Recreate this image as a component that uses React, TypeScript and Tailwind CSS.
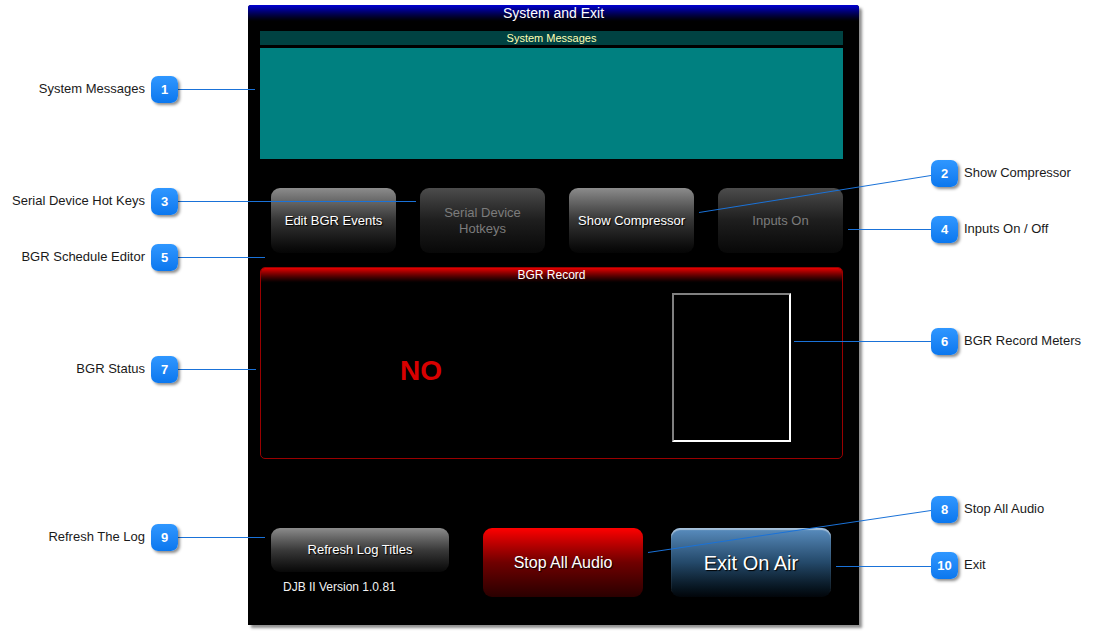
import React from 'react';

type Callout = { n: number; y: number; label: string; side: 'left' | 'right' };

const callouts: Callout[] = [
  { n: 1, y: 89, label: 'System Messages', side: 'left' },
  { n: 3, y: 201, label: 'Serial Device Hot Keys', side: 'left' },
  { n: 5, y: 257, label: 'BGR Schedule Editor', side: 'left' },
  { n: 7, y: 369, label: 'BGR Status', side: 'left' },
  { n: 9, y: 537, label: 'Refresh The Log', side: 'left' },
  { n: 2, y: 173, label: 'Show Compressor', side: 'right' },
  { n: 4, y: 229, label: 'Inputs On / Off', side: 'right' },
  { n: 6, y: 341, label: 'BGR Record Meters', side: 'right' },
  { n: 8, y: 509, label: 'Stop All Audio', side: 'right' },
  { n: 10, y: 565, label: 'Exit', side: 'right' },
];

// leader lines: [x1, y1, x2, y2]
const lines: [number, number, number, number][] = [
  [177, 89, 255, 89],
  [177, 201, 416, 201],
  [177, 257, 265, 257],
  [177, 369, 256, 369],
  [177, 537, 265, 537],
  [699, 212, 931, 175],
  [848, 229, 931, 229],
  [794, 341, 931, 341],
  [648, 552, 931, 510],
  [836, 566, 931, 566],
];

const GrayButton = ({ label, disabled }: { label: string; disabled?: boolean }) => (
  <div
    className={
      disabled
        ? 'w-[125px] h-[65px] rounded-[9px] bg-gradient-to-b from-[#4c4c4c] via-[#1e1e1e] to-[#080808] flex items-center justify-center text-center text-[13px] leading-[16px] text-[#7c7c7c]'
        : 'w-[125px] h-[65px] rounded-[9px] bg-gradient-to-b from-[#8c8c8c] via-[#353535] to-[#050505] flex items-center justify-center text-center text-[13px] leading-[16px] text-white [text-shadow:1px_1px_1px_#000]'
    }
  >
    {label}
  </div>
);

const Badge = ({ n, y, side }: { n: number; y: number; side: 'left' | 'right' }) => (
  <div
    className={
      (side === 'left' ? 'left-[151px] ' : 'left-[931px] ') +
      'absolute w-[27px] h-[27px] rounded-[7px] bg-gradient-to-b from-[#2f97ff] to-[#0a77ee] shadow-[2px_2px_3px_rgba(0,0,0,0.45)] flex items-center justify-center text-white font-bold text-[13px]'
    }
    style={{ top: y - 13 }}
  >
    {n}
  </div>
);

export default function App() {
  return (
    <div className="relative w-[1097px] h-[634px] bg-white overflow-hidden font-['Liberation_Sans',Arial,sans-serif]">
      <div className="pl-[248px] pt-[5px]">
        <div className="w-[611px] h-[620px] bg-black shadow-[3px_3px_3px_rgba(0,0,0,0.45)] rounded-t-[3px] flex flex-col">
          <div className="h-[18px] rounded-t-[3px] bg-gradient-to-b from-[#0000d4] to-black text-center text-white text-[14px] leading-[17px]">
            System and Exit
          </div>
          <div className="pl-[12px] pr-[16px]">
            <div className="mt-[8px] h-[14px] bg-[#004242] text-center text-[#ffffb4] text-[11px] leading-[14px]">
              System Messages
            </div>
            <div className="mt-[3px] h-[111px] bg-[#008080]" />

            <div className="mt-[29px] pl-[11px] flex gap-[24px]">
              <GrayButton label="Edit BGR Events" />
              <GrayButton label={'Serial Device\nHotkeys'} disabled />
              <GrayButton label="Show Compressor" />
              <GrayButton label="Inputs On" disabled />
            </div>

            <div className="mt-[14px] h-[192px] border border-[#9a0000] rounded-[5px] overflow-hidden flex flex-col">
              <div className="h-[16px] bg-gradient-to-b from-[#e60000] to-black text-center text-white text-[12px] leading-[15px]">
                BGR Record
              </div>
              <div className="flex-1 flex">
                <div className="w-[320px] flex items-center justify-center">
                  <span className="text-[#d80000] font-bold text-[28px]">NO</span>
                </div>
                <div className="ml-[91px] mt-[9px] w-[119px] h-[149px] border-2 border-t-[#808080] border-l-[#808080] border-b-white border-r-white" />
              </div>
            </div>

            <div className="mt-[69px] pl-[11px] flex items-start">
              <div className="w-[178px]">
                <div className="h-[44px] rounded-[9px] bg-gradient-to-b from-[#8c8c8c] via-[#3a3a3a] to-[#080808] flex items-center justify-center text-white text-[13px] [text-shadow:1px_1px_1px_#000]">
                  Refresh Log Titles
                </div>
                <div className="mt-[8px] pl-[12px] text-[12px] leading-[14px] text-[#f2f2f2]">
                  DJB II Version 1.0.81
                </div>
              </div>
              <div className="ml-[34px] w-[160px] h-[69px] rounded-[9px] bg-gradient-to-b from-[#ff0000] via-[#700000] to-[#2a0000] flex items-center justify-center text-white text-[16px] [text-shadow:1px_1px_1px_#000]">
                Stop All Audio
              </div>
              <div className="ml-[28px] w-[160px] h-[69px] rounded-[9px] bg-gradient-to-b from-[#5a8ec0] via-[#24496a] to-[#02060a] shadow-[inset_0_2px_1px_rgba(200,215,230,0.7)] flex items-center justify-center text-white text-[20px] [text-shadow:1px_1px_1px_#000]">
                Exit On Air
              </div>
            </div>
          </div>
        </div>
      </div>

      <svg className="absolute inset-0 pointer-events-none" width="1097" height="634">
        {lines.map(([x1, y1, x2, y2], i) => (
          <line key={i} x1={x1} y1={y1 + 0.5} x2={x2} y2={y2 + 0.5} stroke="#1a72d8" strokeWidth="1" />
        ))}
      </svg>

      {callouts.map((c) => (
        <React.Fragment key={c.n}>
          <Badge n={c.n} y={c.y} side={c.side} />
          <div
            className={
              (c.side === 'left' ? 'right-[952px] text-right ' : 'left-[964px] ') +
              'absolute text-[13px] leading-[16px] text-[#1a1a1a] whitespace-nowrap'
            }
            style={{ top: c.y - 8 }}
          >
            {c.label}
          </div>
        </React.Fragment>
      ))}
    </div>
  );
}
